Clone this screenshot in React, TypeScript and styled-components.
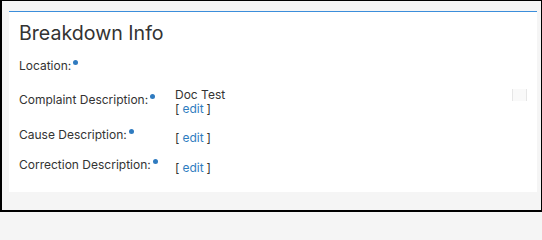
import React from 'react'
import styled, { createGlobalStyle } from 'styled-components'

const GlobalStyle = createGlobalStyle`
  html, body {
    margin: 0;
    padding: 0;
    background: #f5f5f5;
  }
  body {
    font-family: Inter, "Open Sans", "Liberation Sans", sans-serif;
    color: #333;
  }
`

const Frame = styled.div`
  box-sizing: border-box;
  width: 542px;
  height: 212px;
  border: 1px solid #000;
  border-left-width: 2px;
  border-bottom-width: 2px;
  background: #f5f5f5;
  padding: 10px 4px 0 7px;
`

const Panel = styled.section`
  box-sizing: border-box;
  height: 181px;
  background: #fff;
  border-top: 1px solid #3b8edb;
  padding: 10px 10px 0 10px;
`

const Title = styled.h2`
  margin: 0 0 14px 0;
  font-size: 19.6px;
  font-weight: 400;
  line-height: 23px;
  color: #333;
`

const Fields = styled.div`
  display: flex;
  flex-direction: column;
`

const Row = styled.div<{ $height: number }>`
  display: grid;
  grid-template-columns: 156px 1fr 15px;
  align-items: start;
  height: ${(p) => p.$height}px;
  font-size: 12px;
  line-height: 14px;
`

const Label = styled.div`
  white-space: nowrap;
`

const Dot = styled.span`
  display: inline-block;
  width: 5px;
  height: 5px;
  margin-left: 2px;
  border-radius: 50%;
  background: #2f7bc0;
  vertical-align: 5px;
`

const Value = styled.div<{ $offset: number }>`
  margin-top: ${(p) => p.$offset}px;
  display: flex;
  flex-direction: column;
`

const Edit = styled.span`
  color: #333;

  a {
    color: #2f7dbf;
    text-decoration: none;
    padding: 0 3px;
  }
`

const Blank = styled.div`
  box-sizing: border-box;
  width: 15px;
  height: 12px;
  margin-top: -4px;
  background: #f9f9f9;
  border-left: 1px solid #e6e6e6;
  border-right: 1px solid #e6e6e6;
`

type Field = {
  label: string,
  height: number,
  offset?: number,
  text?: string,
  editable?: boolean,
  blank?: boolean
}

const fields: Field[] = [
  { label: 'Location:', height: 34 },
  { label: 'Complaint Description:', height: 35, offset: -5, text: 'Doc Test', editable: true, blank: true },
  { label: 'Cause Description:', height: 30, offset: 3, editable: true },
  { label: 'Correction Description:', height: 30, offset: 3, editable: true }
]

export default function App () {
  return (
    <>
      <GlobalStyle />
      <Frame>
        <Panel>
          <Title>Breakdown Info</Title>
          <Fields>
            {fields.map((f) => (
              <Row key={f.label} $height={f.height}>
                <Label>
                  {f.label}
                  <Dot />
                </Label>
                <Value $offset={f.offset || 0}>
                  {f.text && <span>{f.text}</span>}
                  {f.editable && (
                    <Edit>[<a href="#">edit</a>]</Edit>
                  )}
                </Value>
                {f.blank ? <Blank /> : <span />}
              </Row>
            ))}
          </Fields>
        </Panel>
      </Frame>
    </>
  )
}
